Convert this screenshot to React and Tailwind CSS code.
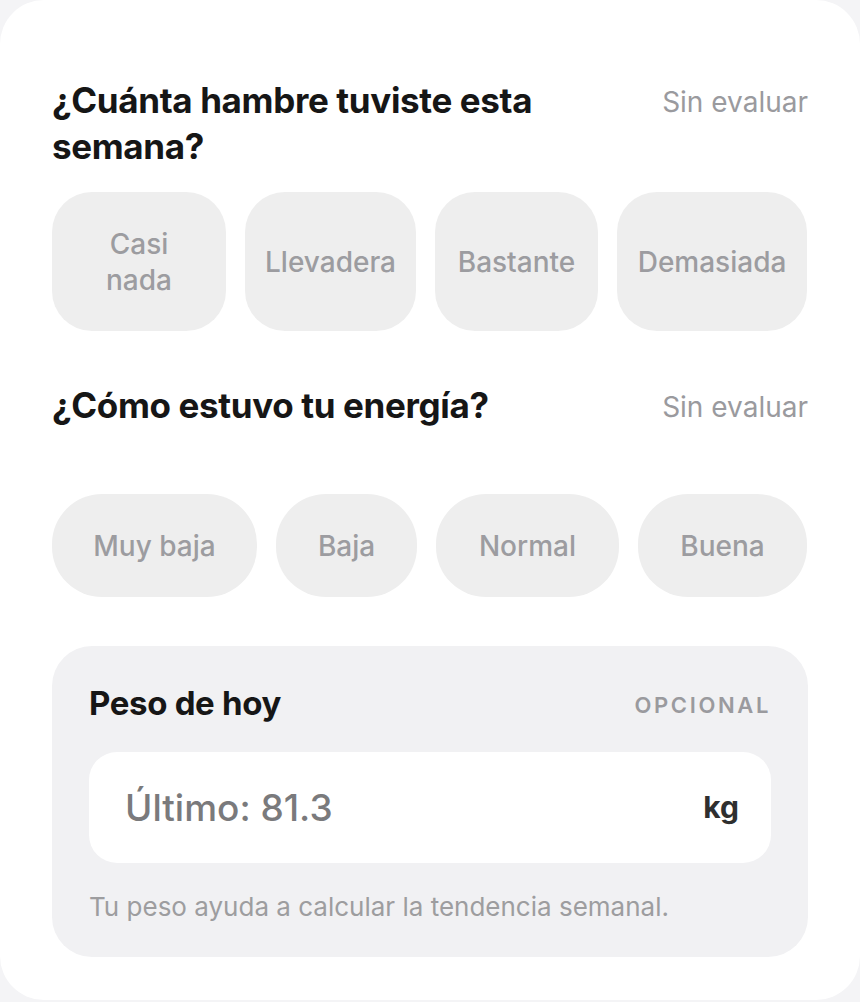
import React from 'react';

const hungerOptions = [
  { label: 'Casi nada' },
  { label: 'Llevadera' },
  { label: 'Bastante' },
  { label: 'Demasiada' },
];

const energyOptions = [
  { label: 'Muy baja' },
  { label: 'Baja' },
  { label: 'Normal' },
  { label: 'Buena' },
];

const SectionHeader = ({ title, className = '' }) => (
  <div className={`flex items-start justify-between gap-6 ${className}`}>
    <h2 className="max-w-[540px] text-[35px] font-bold leading-[46px] tracking-[-0.01em] text-[#161616]">
      {title}
    </h2>
    <span className="shrink-0 pt-[7px] text-[28px] leading-[36px] text-[#9a9a9e]">
      Sin evaluar
    </span>
  </div>
);

const Chip = ({ label, className }) => (
  <button
    className={`flex items-center justify-center bg-[#eeeeee] px-[22px] text-center text-[28px] font-medium leading-[36px] text-[#9c9ca0] ${className}`}
  >
    {label}
  </button>
);

export default function App() {
  return (
    <div className="min-h-screen bg-[#f4f4f6] font-['Inter','Liberation_Sans',sans-serif]">
      <div className="h-[1000px] rounded-[44px] bg-white px-[52px] pt-[77px]">
        <SectionHeader title="¿Cuánta hambre tuviste esta semana?" />

        <div className="mt-[23px] grid grid-cols-[174px_171px_163px_190px] gap-[19px]">
          {hungerOptions.map((opt) => (
            <Chip key={opt.label} label={opt.label} className="h-[139px] rounded-[40px]" />
          ))}
        </div>

        <SectionHeader title="¿Cómo estuvo tu energía?" className="mt-[51px]" />

        <div className="mt-[66px] grid grid-cols-[205px_141px_183px_169px] gap-[19px]">
          {energyOptions.map((opt) => (
            <Chip key={opt.label} label={opt.label} className="h-[103px] rounded-[50px]" />
          ))}
        </div>

        <div className="mt-[49px] rounded-[40px] bg-[#f1f1f3] px-[37px] pb-[35px] pt-[34px]">
          <div className="flex items-center justify-between">
            <h3 className="text-[33px] font-bold leading-[46px] tracking-[-0.01em] text-[#161616]">
              Peso de hoy
            </h3>
            <span className="pt-[4px] text-[22px] font-semibold tracking-[0.12em] text-[#9a9a9e]">
              OPCIONAL
            </span>
          </div>

          <div className="mt-[26px] flex h-[111px] items-center justify-between rounded-[28px] bg-white pl-[36px] pr-[32px]">
            <span className="text-[37px] font-medium text-[#7a7a7c]">
              Último: 81.3
            </span>
            <span className="text-[30px] font-bold text-[#2f2f2f]">kg</span>
          </div>

          <p className="mt-[29px] text-[26px] leading-[30px] text-[#9d9d9f]">
            Tu peso ayuda a calcular la tendencia semanal.
          </p>
        </div>
      </div>
    </div>
  );
}
